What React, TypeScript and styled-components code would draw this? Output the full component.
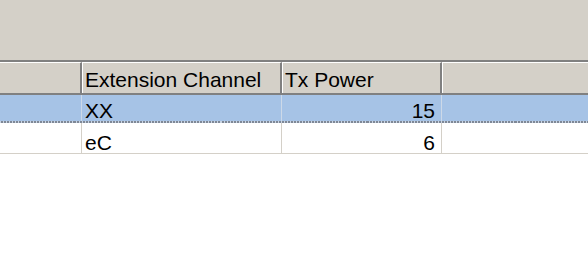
import React from 'react'
import styled, { createGlobalStyle } from 'styled-components'

const GlobalStyle = createGlobalStyle`
  html, body {
    margin: 0;
    padding: 0;
    background: #ffffff;
  }
  body {
    font-family: "Liberation Sans", Arial, sans-serif;
  }
`

const COLUMNS = '82px 200px 160px 1fr'

const Window = styled.div`
  width: 588px;
  height: 264px;
  overflow: hidden;
  background: #ffffff;
  display: flex;
  flex-direction: column;
`

const Toolbar = styled.div`
  height: 60px;
  background: #d4d0c8;
  flex: none;
`

const Table = styled.div`
  display: flex;
  flex-direction: column;
  border-top: 2px solid #808080;
`

const HeaderRow = styled.div`
  display: grid;
  grid-template-columns: ${COLUMNS};
  border-bottom: 2px solid #808080;
  background: #d4d0c8;
`

const HeaderCell = styled.div<{ $first?: boolean }>`
  height: 31px;
  box-sizing: border-box;
  border-top: 1px solid #ffffff;
  border-left: ${(p) => (p.$first ? 'none' : '1px solid #ffffff')};
  border-right: 2px solid #808080;
  padding: 5px 0 0 2px;
  font-size: 21px;
  line-height: 24px;
  color: #000000;
  white-space: nowrap;
  overflow: hidden;

  &:last-child {
    border-right: none;
  }
`

// the selected row carries a dotted focus line along its bottom edge
const Row = styled.div<{ $selected?: boolean }>`
  display: grid;
  grid-template-columns: ${COLUMNS};
  height: ${(p) => (p.$selected ? '28px' : '31px')};
  box-sizing: border-box;
  background: ${(p) => (p.$selected ? '#a6c3e6' : '#ffffff')};
  border-bottom: ${(p) => (p.$selected ? '2px solid transparent' : '1px solid #d4d0c8')};
  border-image: ${(p) =>
    p.$selected
      ? 'repeating-linear-gradient(to right, #7f8896 0 2px, #c9d4e2 2px 3px) 2'
      : 'none'};
`

const Cell = styled.div<{ $align?: 'left' | 'right'; $selected?: boolean }>`
  box-sizing: border-box;
  border-right: 1px solid ${(p) => (p.$selected ? '#cdd9e8' : '#d4d0c8')};
  padding: ${(p) => (p.$selected ? '4px 6px 0 3px' : '8px 6px 0 3px')};
  font-size: 21px;
  line-height: 24px;
  color: #000000;
  text-align: ${(p) => p.$align ?? 'left'};
  white-space: nowrap;
  overflow: hidden;

  &:last-child {
    border-right: none;
  }
`

const rows = [
  { channel: 'XX', power: 15, selected: true },
  { channel: 'eC', power: 6, selected: false },
]

export default function App() {
  return (
    <>
      <GlobalStyle />
      <Window>
        <Toolbar />
        <Table>
          <HeaderRow>
            <HeaderCell $first />
            <HeaderCell>Extension Channel</HeaderCell>
            <HeaderCell>Tx Power</HeaderCell>
            <HeaderCell />
          </HeaderRow>
          {rows.map((r) => (
            <Row key={r.channel} $selected={r.selected}>
              <Cell $selected={r.selected} />
              <Cell $selected={r.selected}>{r.channel}</Cell>
              <Cell $selected={r.selected} $align="right">{r.power}</Cell>
              <Cell $selected={r.selected} />
            </Row>
          ))}
        </Table>
      </Window>
    </>
  )
}
